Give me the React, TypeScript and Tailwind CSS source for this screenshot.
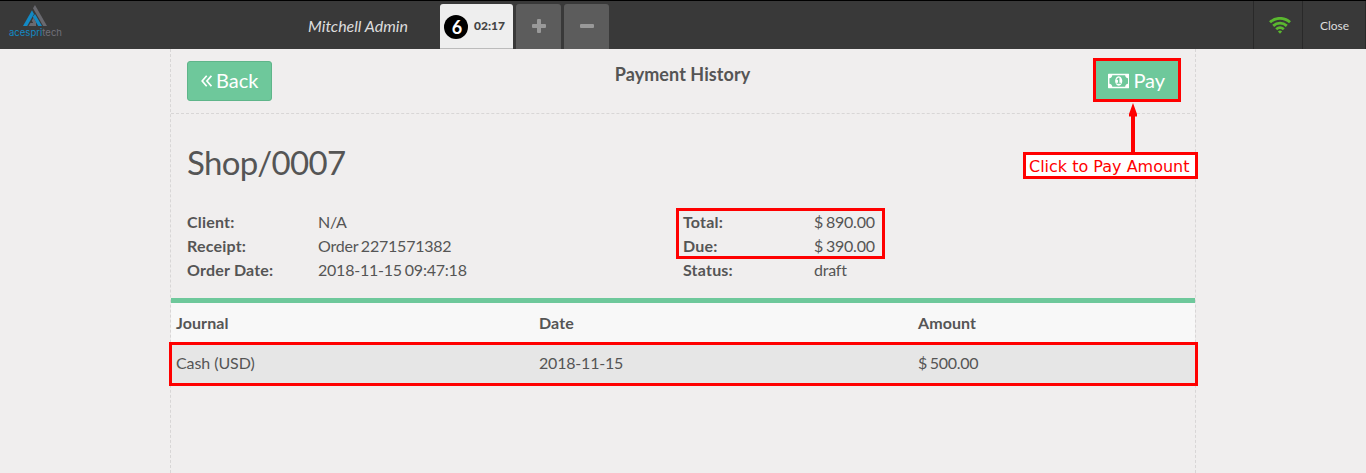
import type { ReactNode } from "react";

function Logo() {
  return (
    <svg className="mt-[3px] ml-[8px] h-[36px] w-[56px]" viewBox="0 0 56 36">
      <path d="M15 22 L24 6.2 L26 10 L19.2 22 Z" fill="#1389c4" />
      <path d="M25 4.3 L27 1 L39 22 L35.2 22 Z" fill="#69696f" />
      <path d="M24.8 12.8 L27 10 L34 22 L30.2 22 Z" fill="#1389c4" />
      <path d="M25.4 13.8 L28 18 V22 H20.6 L22.4 19 H25.2 L23.8 16.8 Z" fill="#69696f" />
      <text x="1" y="31.6" fontFamily="Inter, sans-serif" fontSize="9.4" textLength="53" lengthAdjust="spacingAndGlyphs" fill="#70707a">
        <tspan fill="#1389c4">acespri</tspan>tech
      </text>
    </svg>
  );
}

function WifiIcon() {
  return (
    <svg className="h-[17px] w-[22px]" viewBox="0 0 22 17" fill="none" stroke="#5ab82f" strokeWidth="2.8">
      <path d="M1 5.3 C6.7 0 15.3 0 21 5.3" />
      <path d="M4.2 8.9 C8.2 5.3 13.8 5.3 17.8 8.9" />
      <path d="M7.2 12.3 C9.6 10.2 12.4 10.2 14.8 12.3" />
      <path d="M8.9 14.4 Q11 12.8 13.1 14.4 L11 16.7 Z" fill="#5ab82f" stroke="none" />
    </svg>
  );
}

function MoneyIcon() {
  return (
    <svg className="mt-[1px] h-[20px] w-[21.43px]" viewBox="0 0 1920 1792" fill="currentColor">
      <path d="M768 1152h384v-96h-128v-448h-114l-148 137 77 80q42-37 55-57h2v288h-128v96zm512-256q0 70-21 142t-59.5 134-101.5 101-138 39-138-39-101.5-101-59.5-134-21-142 21-142 59.5-134 101.5-101 138-39 138 39 101.5 101 59.5 134 21 142zm512 256v-512q-106 0-181-75t-75-181h-1152q0 106-75 181t-181 75v512q106 0 181 75t75 181h1152q0-106 75-181t181-75zm128-832v1152q0 26-19 45t-45 19h-1792q-26 0-45-19t-19-45v-1152q0-26 19-45t45-19h1792q26 0 45 19t19 45z" />
    </svg>
  );
}

function Row({ label, children }: { label: string; children: ReactNode }) {
  return (
    <div className="flex h-6 items-center">
      <span className="w-[131px] font-bold tracking-[0.2px]">{label}</span>
      <span className="tracking-[-0.22px] [word-spacing:-1px]">{children}</span>
    </div>
  );
}

export default function App() {
  return (
    <div className="flex h-[473px] w-[1366px] flex-col overflow-hidden bg-[#f0eeee] font-[Lato,sans-serif] text-[16px] text-[#555]">
      <header className="flex h-[49px] shrink-0 border-t border-black bg-[#393939] text-[#ddd]">
        <div className="w-[308px]">
          <Logo />
        </div>
        <div className="flex w-[132px] items-center pt-[1px] text-[16px] italic">Mitchell Admin</div>
        <div className="flex gap-[3px] pt-[3px]">
          <div className="flex w-[73px] items-center rounded-t-[3px] border-b border-[#bbb] bg-[#eee] pl-1 text-[#444]">
            <span className="mt-[2px] flex size-6 items-center justify-center rounded-full bg-black pl-[2px] text-[18px] font-bold text-white">6</span>
            <span className="ml-[6px] text-[12px] font-black">02:17</span>
          </div>
          <div className="flex w-[45px] items-center justify-center rounded-t-[3px] bg-[#5c5c5c]">
            <svg className="mb-[2px] h-[14px] w-[14px]" viewBox="0 0 14 14" fill="#999">
              <rect x="5" width="4" height="14" rx="1" />
              <rect y="5" width="14" height="4" rx="1" />
            </svg>
          </div>
          <div className="flex w-[45px] items-center justify-center rounded-t-[3px] bg-[#5c5c5c]">
            <svg className="mb-[2px] h-[14px] w-[14px]" viewBox="0 0 14 14" fill="#999">
              <rect y="5" width="14" height="4" rx="1" />
            </svg>
          </div>
        </div>
        <div className="ml-auto flex">
          <div className="flex w-[49px] items-center justify-center border-l border-[#292929] pl-1"><WifiIcon /></div>
          <div className="flex w-[64px] items-center justify-center border-x border-[#292929] pt-[1px] pl-[1px] text-[12px]">Close</div>
        </div>
      </header>

      <main className="ml-[170px] flex w-[1026px] flex-1 flex-col border-x border-dashed border-[#d8d6d6]">
        <div className="relative flex h-[65px] shrink-0 justify-between border-b border-dashed border-[#d8d6d6] px-4 pt-3">
          <button className="flex h-10 w-[85px] items-center rounded-[3px] border border-[#5fb58a] bg-[#6ec89b] pb-[2px] pl-[13px] text-[20px] text-white">
            <svg className="mt-[2px] h-[12px] w-[11px]" viewBox="0 0 11 12" fill="none" stroke="currentColor" strokeWidth="1.7">
              <path d="M5.7 .8 L1.2 6 L5.7 11.2 M10.4 .8 L5.9 6 L10.4 11.2" />
            </svg>
            <span className="ml-[4px]">Back</span>
          </button>
          <h1 className="pt-[2px] text-[18px] leading-[22px] font-bold tracking-[0.07px]">Payment History</h1>
          <button className="mt-[-3px] mr-[-2px] flex h-11 w-[88px] items-center border-3 border-[#f00] bg-[#6ec89b] pl-3 text-[20px] text-white">
            <MoneyIcon />
            <span className="ml-[4px]">Pay</span>
          </button>
          <div className="absolute top-[54px] left-[852px] flex w-[175px] flex-col items-center">
            <svg className="ml-[45px] h-[49px] w-[10px]" viewBox="0 0 10 49" fill="#f00">
              <path d="M5 0 L9 11 V13.5 H7 V49 H3 V13.5 H1 V11 Z" />
            </svg>
            <div className="h-[27px] w-full border-3 border-[#f00] bg-white pl-[3px] font-['DejaVu_Sans',sans-serif] text-[16px] leading-[24px] whitespace-nowrap text-[#f00]">
              Click to Pay Amount
            </div>
          </div>
        </div>

        <section className="h-[184px] shrink-0 px-4">
          <h2 className="pt-[26px] text-[33px] leading-[44px] tracking-[-0.65px]">Shop/0007</h2>
          <div className="mt-[26px] flex">
            <div className="w-[496px]">
              <Row label="Client:">N/A</Row>
              <Row label="Receipt:">Order 2271571382</Row>
              <Row label="Order Date:">2018-11-15 09:47:18</Row>
            </div>
            <div>
              <div className="-mt-[2px] -ml-[7px] h-[51px] w-[209px] border-3 border-[#f00] pl-1">
                <div className="-mt-[1px]">
                  <Row label="Total:">$ 890.00</Row>
                  <Row label="Due:">$ 390.00</Row>
                </div>
              </div>
              <div className="-mt-[1px]">
                <Row label="Status:">draft</Row>
              </div>
            </div>
          </div>
        </section>

        <section>
          <div className="grid h-[44px] grid-cols-[363px_379px_1fr] items-center border-t-5 border-[#6ec89b] bg-[#f8f8f8] px-[5px] font-bold tracking-[0.1px]">
            <span>Journal</span><span>Date</span><span>Amount</span>
          </div>
          <div className="-mr-[3px] -ml-[2px] grid h-[44px] grid-cols-[363px_379px_1fr] items-center border-3 border-[#f00] bg-[#e6e6e6] pb-[2px] pl-1 tracking-[-0.08px]">
            <span>Cash (USD)</span><span className="tracking-[-0.2px]">2018-11-15</span><span className="tracking-[-0.25px] [word-spacing:-1.2px]">$ 500.00</span>
          </div>
        </section>
      </main>
    </div>
  );
}
